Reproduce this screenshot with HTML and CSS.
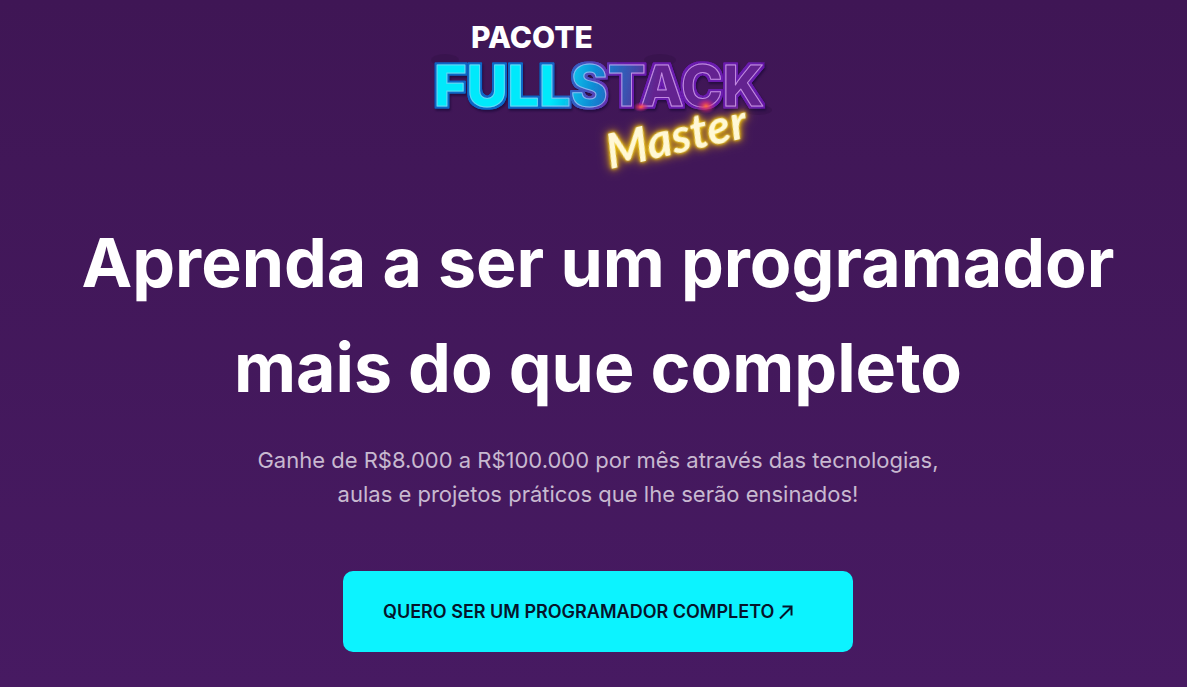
FILE: index.html
```html
<!DOCTYPE html>
<html lang="pt-BR">
<head>
<meta charset="utf-8">
<meta name="viewport" content="width=device-width, initial-scale=1">
<title>Pacote Fullstack Master</title>
<link rel="stylesheet" href="styles.css">
</head>
<body>
<main class="hero">
  <svg class="logo" viewBox="0 0 360 176" role="img" aria-label="Pacote Fullstack Master">
    <defs>
      <linearGradient id="fill" gradientUnits="userSpaceOnUse" x1="134" y1="80" x2="232" y2="100">
        <stop offset="0" stop-color="#00e9fb"/>
        <stop offset=".45" stop-color="#1380d0"/>
        <stop offset="1" stop-color="#632490"/>
      </linearGradient>
      <linearGradient id="shine" gradientUnits="userSpaceOnUse" x1="110" y1="80" x2="220" y2="80">
        <stop offset="0" stop-color="#5fdcf8"/>
        <stop offset=".5" stop-color="#83b9f2"/>
        <stop offset="1" stop-color="#c389e2"/>
      </linearGradient>
      <filter id="rim" filterUnits="userSpaceOnUse" x="0" y="40" width="360" height="72">
        <feMorphology in="SourceAlpha" operator="dilate" radius="2" result="wide"/>
        <feFlood flood-color="#0868c8" x="0" y="40" width="170" height="72" result="left"/>
        <feFlood flood-color="#6b1cae" x="170" y="40" width="190" height="72" result="right"/>
        <feMerge result="halves"><feMergeNode in="left"/><feMergeNode in="right"/></feMerge>
        <feGaussianBlur in="halves" stdDeviation="18 0" result="blend"/>
        <feComposite in="blend" in2="wide" operator="in" result="edge"/>
        <feGaussianBlur in="edge" stdDeviation=".6" result="softEdge"/>
        <feMerge><feMergeNode in="softEdge"/><feMergeNode in="softEdge"/><feMergeNode in="SourceGraphic"/></feMerge>
      </filter>
      <radialGradient id="spark"><stop offset="0" stop-color="#ff6a3c"/><stop offset=".5" stop-color="#e02c6c" stop-opacity=".6"/><stop offset="1" stop-color="#b02490" stop-opacity="0"/></radialGradient>
    </defs>
    <ellipse class="smoke" cx="27" cy="50" rx="14" ry="6"/>
    <ellipse class="smoke" cx="242" cy="50" rx="16" ry="6"/>
    <ellipse class="smoke" cx="340" cy="100" rx="14" ry="5"/>
    <text class="logo-top" x="114" y="38" text-anchor="middle">PACOTE</text>
    <g class="logo-shadow"><text class="logo-main" x="181" y="96" text-anchor="middle" filter="url(#rim)">FULLSTACK</text></g>
    <ellipse cx="223" cy="97" rx="8" ry="5" fill="url(#spark)"/>
    <ellipse cx="288" cy="96" rx="10" ry="8" fill="url(#spark)"/>
    <text class="logo-script" text-anchor="middle" transform="translate(262 143) rotate(-13)">Master</text>
  </svg>
  <h1 class="title">Aprenda a ser um programador mais do que completo</h1>
  <p class="lead">Ganhe de R$8.000 a R$100.000 por mês através das tecnologias, aulas e projetos práticos que lhe serão ensinados!</p>
  <a class="cta" href="#comprar">
    <span>QUERO SER UM PROGRAMADOR COMPLETO</span>
    <svg class="arrow" viewBox="0 0 16 16" aria-hidden="true"><path d="M2 14.500L13 3.500M4.500 2.500H13.500V11.500"/></svg>
  </a>
</main>
</body>
</html>
```
FILE: styles.css
```css
* { box-sizing: border-box; }
body {
  margin: 0;
  min-height: 100vh;
  background: linear-gradient(#3f1655, #471a62);
  font-family: Inter, "Liberation Sans", sans-serif;
  color: #fff;
}
.hero {
  display: flex;
  flex-direction: column;
  align-items: center;
  padding: 10px 11px 35px 20px;
}
.logo { width: 360px; height: 176px; overflow: visible; }
.smoke { fill: #35124a; opacity: .6; }
.logo-top { font-size: 30px; font-weight: 800; fill: #fff; }
.logo-shadow { filter: drop-shadow(1px 2px 1px #240c40); }
.logo-main {
  font-size: 56px;
  font-weight: 800;
  fill: url(#fill);
  stroke: url(#shine);
  stroke-width: 1px;
  stroke-linejoin: round;
}
.logo-script {
  font-family: Lato, sans-serif;
  font-size: 48px;
  font-style: italic;
  font-weight: 700;
  fill: #fff8d5;
  filter: drop-shadow(0 0 1px #f0c810) drop-shadow(0 0 2px #e9c010) drop-shadow(0 0 5px #c89018);
}
.title {
  max-width: 1110px;
  margin: 24px 0 0;
  font-size: 68px;
  font-weight: 700;
  line-height: 105px;
  text-align: center;
}
.lead {
  max-width: 710px;
  margin: 23px 0 0;
  font-size: 22px;
  line-height: 34px;
  text-align: center;
  color: #c8b9d0;
}
.cta {
  display: flex;
  align-items: center;
  gap: 4px;
  width: 100%;
  max-width: 510px;
  margin-top: 60px;
  padding: 28px 40px;
  border-radius: 10px;
  background: #0cf3ff;
  color: #06142b;
  font-size: 18px;
  font-weight: 600;
  line-height: 25px;
  text-decoration: none;
}
.arrow {
  width: 16px;
  height: 16px;
  fill: none;
  stroke: currentColor;
  stroke-width: 2;
}
```
